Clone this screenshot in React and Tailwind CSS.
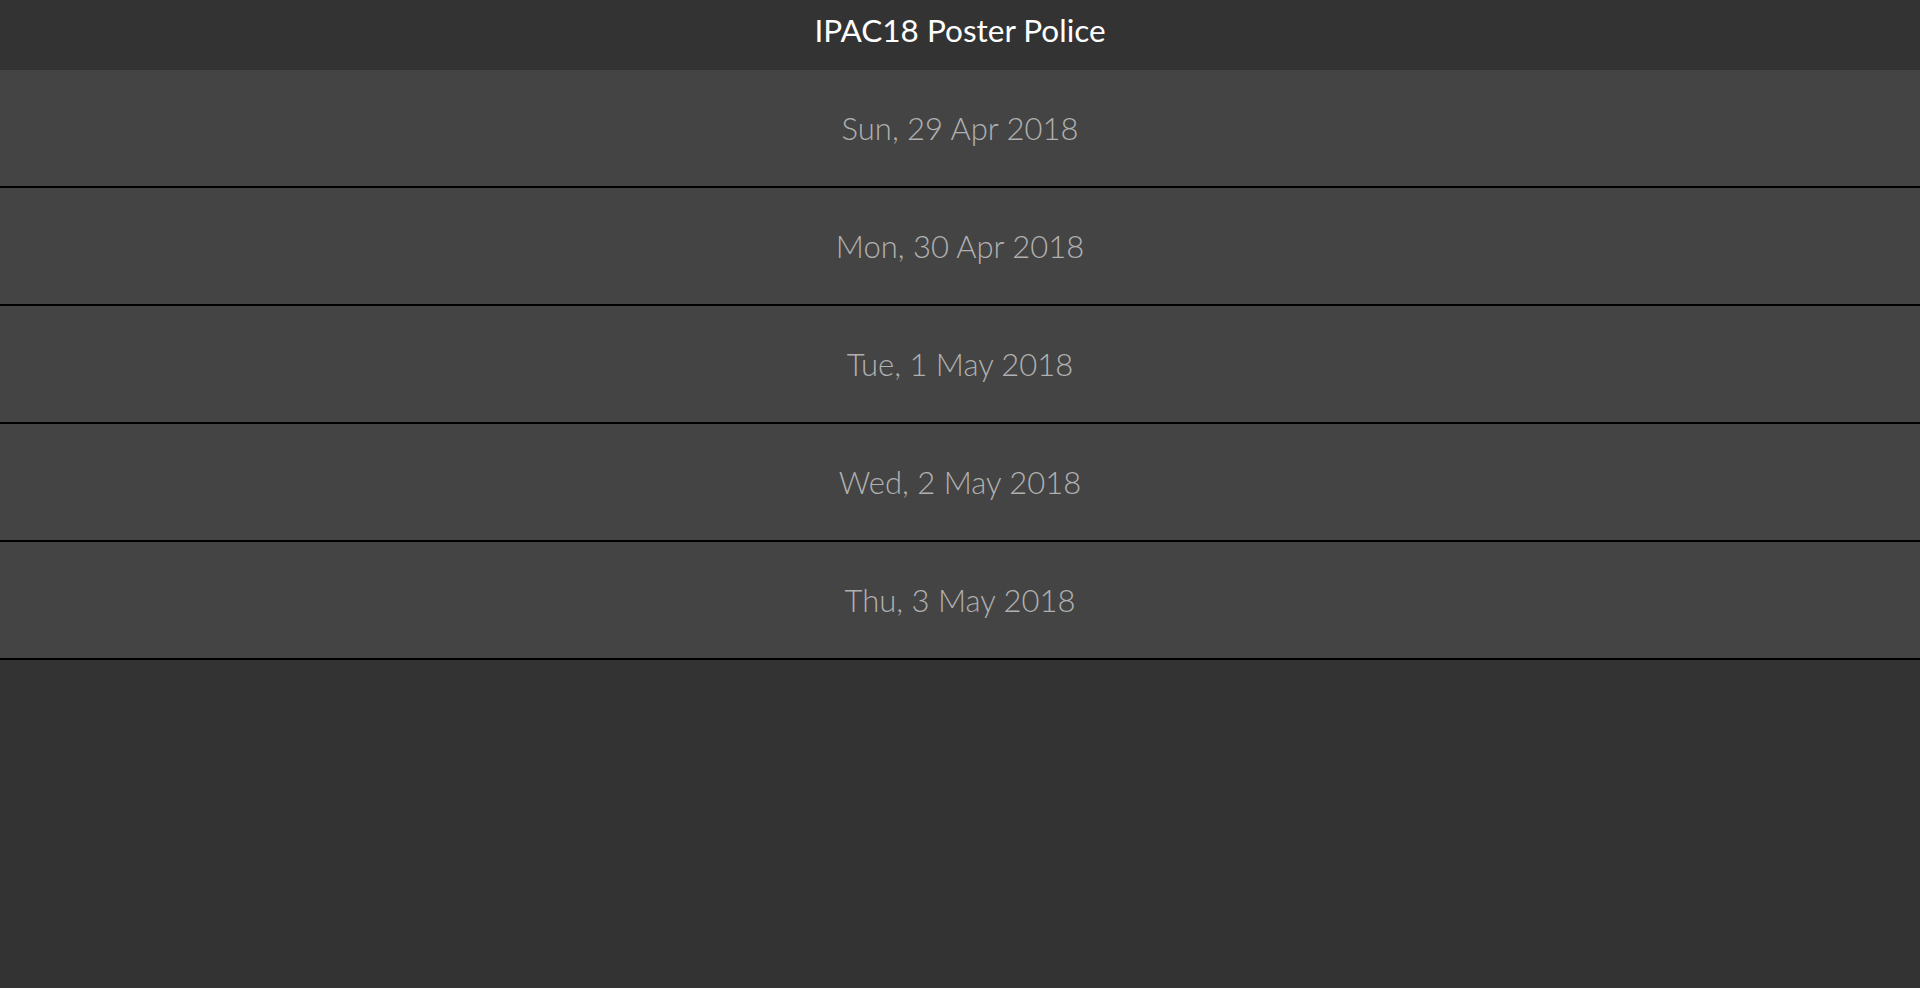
import React from "react";

const days = [
  "Sun, 29 Apr 2018",
  "Mon, 30 Apr 2018",
  "Tue, 1 May 2018",
  "Wed, 2 May 2018",
  "Thu, 3 May 2018",
];

export default function App() {
  return (
    <div className="min-h-screen bg-[#333333] font-['Lato',sans-serif]">
      <header className="h-[70px] flex justify-center bg-[#333333] pt-[10px]">
        <h1 className="text-[31.5px] leading-[40px] text-white">IPAC18 Poster Police</h1>
      </header>

      <ul>
        {days.map((day) => (
          <li
            key={day}
            className="h-[118px] flex items-center justify-center bg-[#444444] border-b-2 border-black text-[31px] font-light text-[#b0b0b0]"
          >
            {day}
          </li>
        ))}
      </ul>
    </div>
  );
}
